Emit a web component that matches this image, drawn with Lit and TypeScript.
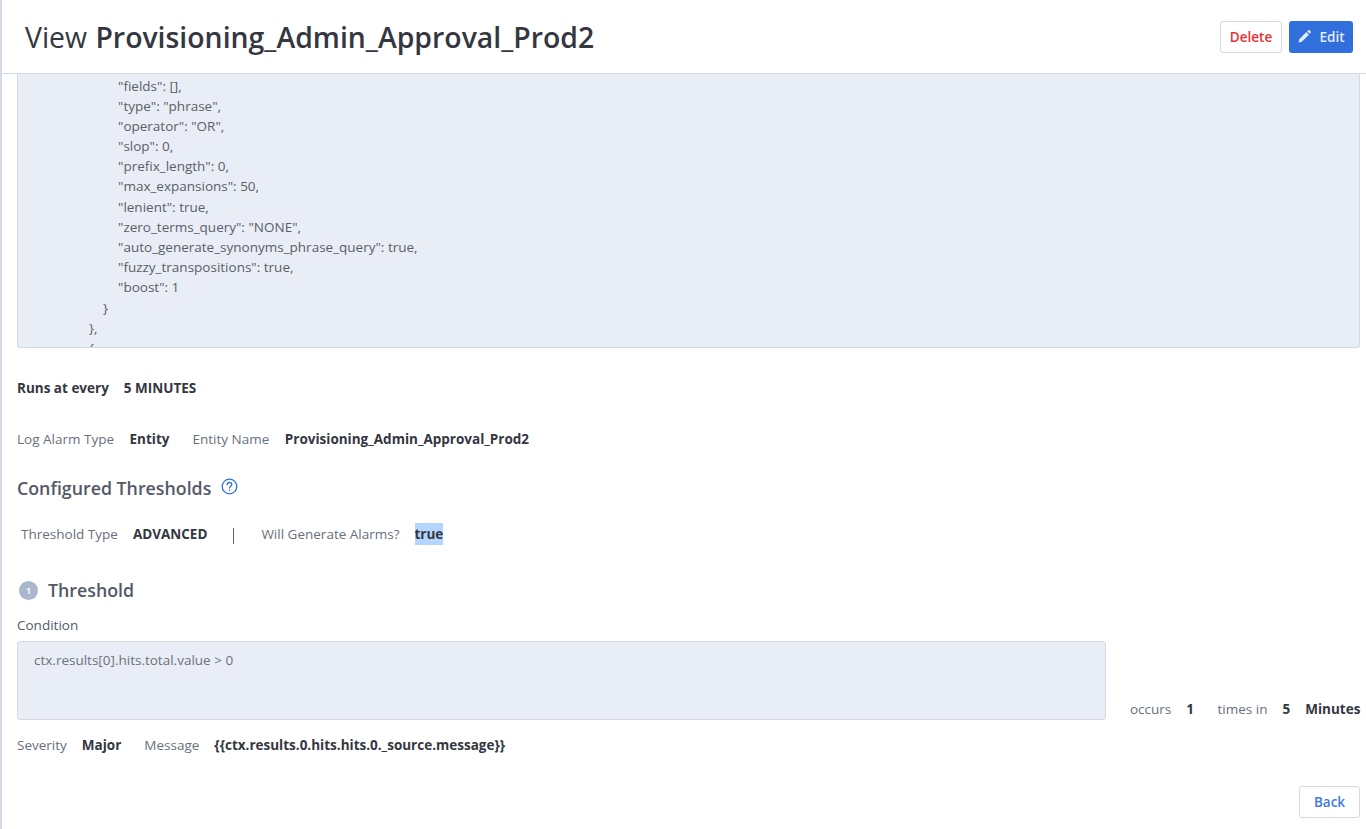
import { LitElement, html, css } from "lit";
import { customElement } from "lit/decorators.js";

const inner = [
  '"fields": [],',
  '"type": "phrase",',
  '"operator": "OR",',
  '"slop": 0,',
  '"prefix_length": 0,',
  '"max_expansions": 50,',
  '"lenient": true,',
  '"zero_terms_query": "NONE",',
  '"auto_generate_synonyms_phrase_query": true,',
  '"fuzzy_transpositions": true,',
  '"boost": 1',
];

@customElement("app-root")
export class AppRoot extends LitElement {
  static styles = css`
    :host {
      display: block;
      height: 829px;
      overflow: hidden;
      background: #fff;
      font-family: "Open Sans", "Liberation Sans", sans-serif;
      font-size: 13.5px;
      color: #343741;
      border-left: 2px solid #d3dae6;
      box-sizing: border-box;
    }
    header {
      height: 73px;
      border-bottom: 1px solid #d3dae6;
      display: flex;
      align-items: center;
      justify-content: space-between;
      padding: 0 13px 0 23px;
    }
    h1 {
      margin: 2px 0 0;
      font-size: 28.4px;
      font-weight: 500;
      color: #343741;
      line-height: 1;
      word-spacing: 1px;
    }
    h1 b { font-weight: 600; }
    .actions { display: flex; gap: 7px; }
    .btn {
      height: 32px;
      border-radius: 3px;
      box-sizing: border-box;
      display: flex;
      align-items: center;
      justify-content: center;
      font-weight: 600;
      font-size: 13.5px;
    }
    .delete { width: 62px; border: 1px solid #d3dae6; color: #ea2e36; background: #fff; }
    .edit { width: 64px; background: #3170dc; color: #e4ecfa; gap: 7px; }
    .edit svg { width: 15px; height: 15px; display: block; }
    main { padding: 0 6px 0 15px; }
    .code {
      height: 274px;
      box-sizing: border-box;
      background: #e9edf5;
      border: 1px solid #d3dae6;
      border-top: 0;
      border-radius: 0 0 3px 3px;
      overflow: hidden;
      color: #5a6068;
      line-height: 20.2px;
      padding-top: 1.5px;
    }
    .code div { white-space: pre; height: 20.2px; }
    .l3 { padding-left: 100px; }
    .l2 { padding-left: 85px; }
    .l1 { padding-left: 71px; }
    .row { display: flex; align-items: center; }
    .label { color: #69707d; }
    .val { font-weight: 700; color: #343741; }
    .runs { margin-top: 31px; height: 18px; gap: 15px; font-weight: 700; }
    .type { margin-top: 33px; height: 18px; }
    .type .val { margin: 0 23px 0 15.5px; }
    h2 {
      margin: 0;
      font-size: 17.8px;
      font-weight: 600;
      color: #535966;
      line-height: 22px;
    }
    .config { margin-top: 29px; gap: 9.5px; }
    .config svg { width: 17px; height: 17px; display: block; margin-top: -4px; }
    .thr { margin-top: 25px; padding-left: 4px; height: 20px; }
    .thr .val { margin: 0 0 0 15px; }
    .sep { width: 1px; height: 16px; background: #5f6571; margin: 4px 27px 0 26px; }
    mark { background: #b4d5fd; color: inherit; padding: 2px 0; margin-left: 15px; font-weight: 700; }
    .t1 { margin-top: 35px; gap: 10px; }
    .num {
      width: 19px;
      height: 19px;
      margin-left: 2px;
      border-radius: 50%;
      background: #aab7cd;
      color: #fff;
      font-size: 8px;
      font-weight: 700;
      display: flex;
      align-items: center;
      justify-content: center;
    }
    .cond-label { margin-top: 15px; line-height: 18px; color: #535966; }
    .cond-row { display: flex; margin-top: 7px; align-items: flex-end; }
    .cond {
      width: 1089px;
      height: 79px;
      box-sizing: border-box;
      flex: none;
      background: #e9edf5;
      border: 1px solid #d3dae6;
      border-radius: 3px;
      color: #6c727d;
      padding: 8px 16px;
      line-height: 20px;
    }
    .occ { margin: 0 0 2px 24px; height: 18px; white-space: nowrap; line-height: 18px; }
    .occ .val { margin-left: 15px; }
    .occ .next { margin-left: 20px; }
    .sev { margin-top: 16px; height: 18px; }
    .sev .val { margin: 0 23px 0 15px; }
    .foot { display: flex; justify-content: flex-end; margin-top: 32px; }
    .back { width: 61px; border: 1px solid #d3dae6; color: #3f7bdc; background: #fff; }
  `;

  render() {
    return html`
      <header>
        <h1>View <b>Provisioning_Admin_Approval_Prod2</b></h1>
        <div class="actions">
          <div class="btn delete">Delete</div>
          <div class="btn edit">
            <svg viewBox="0 0 16 16" fill="#e4ecfa"><path d="M1.5 14.5l.9-3.6 7.6-7.6 2.7 2.7-7.6 7.6zM10.9 2.4l1-1c.4-.4 1-.4 1.4 0l1.3 1.3c.4.4.4 1 0 1.4l-1 1z"/></svg>
            Edit
          </div>
        </div>
      </header>
      <main>
        <div class="code">
          ${inner.map((l) => html`<div class="l3">${l}</div>`)}
          <div class="l2">}</div>
          <div class="l1">},</div>
          <div class="l1">{</div>
        </div>
        <div class="row runs">Runs at every <span>5 MINUTES</span></div>
        <div class="row type">
          <span class="label">Log Alarm Type</span><span class="val">Entity</span>
          <span class="label">Entity Name</span><span class="val">Provisioning_Admin_Approval_Prod2</span>
        </div>
        <div class="row config">
          <h2>Configured Thresholds</h2>
          <svg viewBox="0 0 17 17" fill="none" stroke="#3170dc" stroke-width="1.3">
            <circle cx="8.5" cy="8.5" r="7.3"/>
            <path d="M6.2 6.7c0-1.3 1-2.2 2.3-2.2s2.3.9 2.3 2c0 1.8-2.3 1.8-2.3 3.6" stroke-linecap="round"/>
            <path d="M8.5 11.6v1.3"/>
          </svg>
        </div>
        <div class="row thr">
          <span class="label">Threshold Type</span><span class="val">ADVANCED</span>
          <span class="sep"></span>
          <span class="label">Will Generate Alarms?</span><mark>true</mark>
        </div>
        <div class="row t1"><span class="num">1</span><h2>Threshold</h2></div>
        <div class="cond-label">Condition</div>
        <div class="cond-row">
          <div class="cond">ctx.results[0].hits.total.value &gt; 0</div>
          <div class="occ">
            <span class="label">occurs</span><span class="val">1</span>
            <span class="label next">times in</span><span class="val">5</span><span class="val">Minutes</span>
          </div>
        </div>
        <div class="row sev">
          <span class="label">Severity</span><span class="val">Major</span>
          <span class="label">Message</span><span class="val">{{ctx.results.0.hits.hits.0._source.message}}</span>
        </div>
        <div class="foot"><div class="btn back">Back</div></div>
      </main>
    `;
  }
}
